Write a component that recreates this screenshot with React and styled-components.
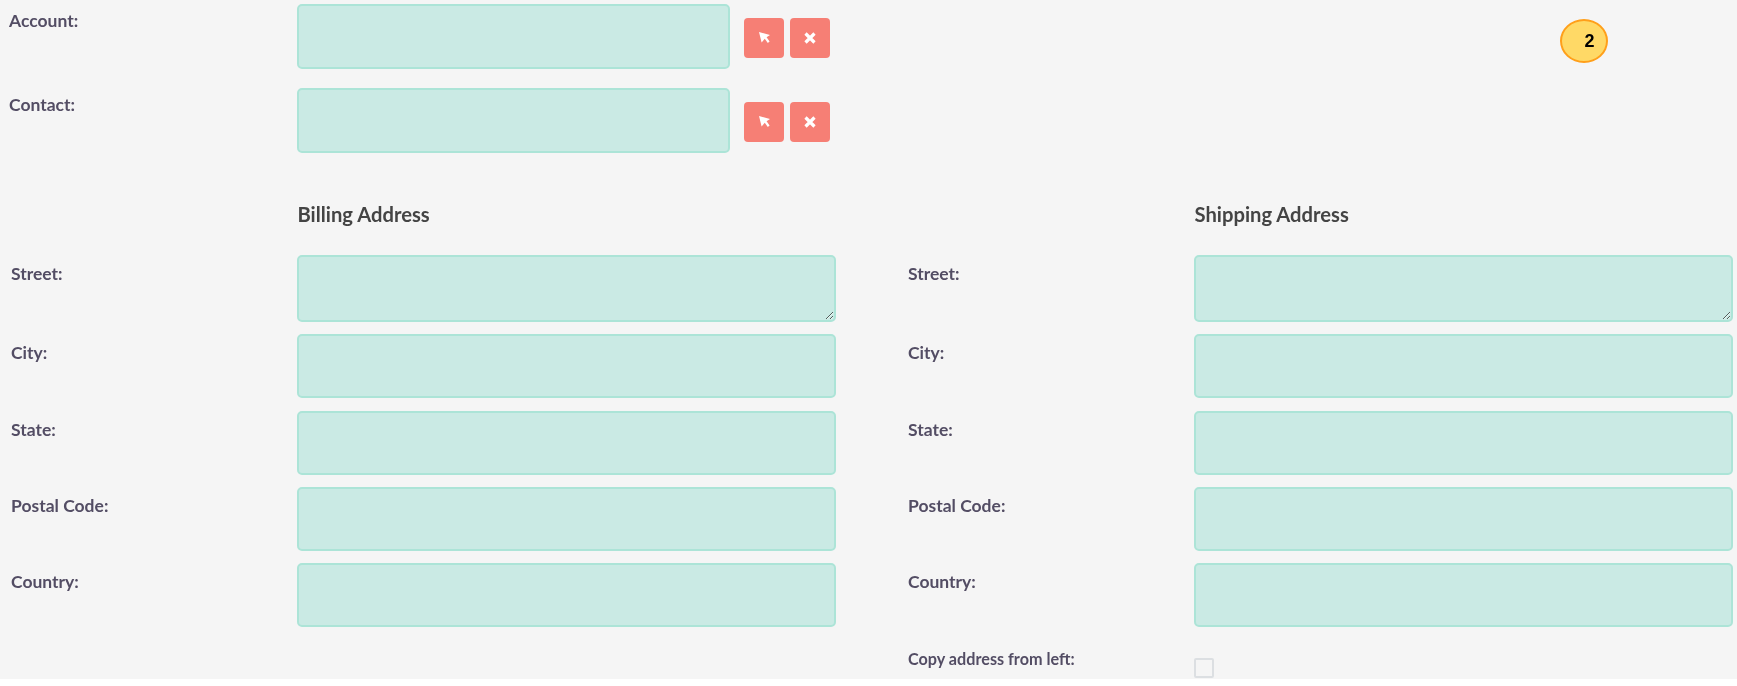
import React from "react";
import styled, { createGlobalStyle } from "styled-components";

const Global = createGlobalStyle`
  html, body { margin: 0; padding: 0; background: #fff; }
  body { font-family: Lato, "Open Sans", sans-serif; overflow: hidden; }
  * { box-sizing: border-box; }
`;

const Page = styled.div`
  position: relative;
  height: 679px;
  background: #f5f5f5;
  padding: 4px 4px 0 0;
  overflow: hidden;
  filter: blur(0.45px);
`;

const TopRow = styled.div`
  display: grid;
  grid-template-columns: 297px 433px auto;
  height: 65px;
  margin-bottom: 19px;
`;

const Label = styled.label`
  font-size: ${(p) => p.$size || 17.5}px;
  font-weight: 700;
  line-height: 20px;
  color: #534d64;
  padding-left: ${(p) => p.$indent}px;
  padding-top: ${(p) => p.$top}px;
`;

const fieldCss = `
  display: block;
  width: 100%;
  margin: 0;
  background: #caeae4;
  border: 2px solid #ace4d7;
  border-radius: 5px;
  outline: none;
  font-family: Lato, sans-serif;
`;

const TextInput = styled.input`
  ${fieldCss}
  height: ${(p) => p.$height || 65}px;
`;

const TextArea = styled.textarea`
  ${fieldCss}
  height: 67px;
  resize: both;
`;

const ButtonGroup = styled.div`
  display: flex;
  gap: 6px;
  margin: 14px 0 0 14px;
`;

const IconButton = styled.button`
  width: 40px;
  height: 40px;
  padding: 0;
  display: flex;
  align-items: center;
  justify-content: center;
  background: #f67f75;
  border: 0;
  border-radius: 4px;
`;

const AddressGrid = styled.div`
  display: grid;
  grid-template-columns: 897px 1fr;
  margin-top: 27px;
`;

const Column = styled.section`
  display: flex;
  flex-direction: column;
`;

const Heading = styled.h3`
  margin: 10px 0 17px 297.5px;
  font-size: 20.2px;
  line-height: 48px;
  height: 48px;
  font-weight: 700;
  color: #444444;
`;

const FieldRow = styled.div`
  display: grid;
  grid-template-columns: 297px 539px;
  margin-bottom: ${(p) => p.$gap ?? 12}px;
`;

const CheckBox = styled.input`
  appearance: none;
  width: 20px;
  height: 20px;
  margin: 19px 0 0;
  background: #f5f5f5;
  border: 2px solid #dcdfe2;
  border-radius: 2px;
`;

const Badge = styled.div`
  position: absolute;
  left: 1560px;
  top: 19px;
  width: 48px;
  height: 44px;
  padding-left: 11px;
  display: flex;
  align-items: center;
  justify-content: center;
  background: #ffd966;
  border: 2px solid #ff9f1a;
  border-radius: 50%;
  font-family: "Liberation Sans", Arial, sans-serif;
  font-size: 18px;
  font-weight: 700;
  color: #000;
`;

const SelectIcon = () => (
  <svg width="13" height="14" viewBox="0 0 13 14" aria-hidden="true">
    <path d="M1 1 L12 4 L8.6 6.2 L11.6 10.6 L9.8 12 L6.8 7.8 L3.6 11.4 Z" fill="#fff" />
  </svg>
);

const ClearIcon = () => (
  <svg width="12" height="12" viewBox="0 0 12 12" aria-hidden="true">
    <path d="M1.5 1.5 L10.5 10.5 M10.5 1.5 L1.5 10.5" stroke="#fff" strokeWidth="3.2" fill="none" />
  </svg>
);

const relation = (label) => (
  <TopRow key={label}>
    <Label $indent={9} $top={7}>{label}</Label>
    <TextInput />
    <ButtonGroup>
      <IconButton type="button"><SelectIcon /></IconButton>
      <IconButton type="button"><ClearIcon /></IconButton>
    </ButtonGroup>
  </TopRow>
);

const Address = ({ title, children }) => (
  <Column>
    <Heading>{title}</Heading>
    <FieldRow>
      <Label $indent={11} $top={9}>Street:</Label>
      <TextArea />
    </FieldRow>
    {[["City:", 13], ["State:", 12], ["Postal Code:", 12], ["Country:", 12]].map(([name, gap]) => (
      <FieldRow key={name} $gap={gap}>
        <Label $indent={11} $top={9}>{name}</Label>
        <TextInput $height={64} />
      </FieldRow>
    ))}
    {children}
  </Column>
);

export default function App() {
  return (
    <>
      <Global />
      <Page>
        {relation("Account:")}
        {relation("Contact:")}
        <AddressGrid>
          <Address title="Billing Address" />
          <Address title="Shipping Address">
            <FieldRow>
              <Label $indent={11} $top={10} $size={16.2}>Copy address from left:</Label>
              <CheckBox type="checkbox" />
            </FieldRow>
          </Address>
        </AddressGrid>
        <Badge>2</Badge>
      </Page>
    </>
  );
}
